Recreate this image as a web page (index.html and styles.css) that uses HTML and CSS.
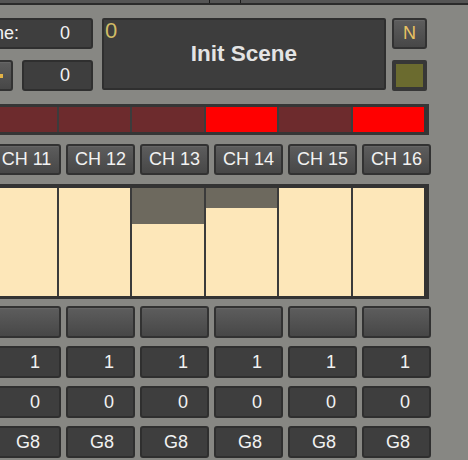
FILE: index.html
```html
<!DOCTYPE html>
<html>
<head>
<meta charset="utf-8">
<title>Scene Mixer</title>
<meta name="viewport" content="width=device-width, initial-scale=1">
<link rel="stylesheet" href="styles.css">
</head>
<body>
<div class="topbar"><span class="tick"></span><span class="tick tick2"></span></div>

<div class="head">
  <div class="lcol">
    <div class="vbox"><span class="label">Scene:</span><span>0</span></div>
    <div class="hrow">
      <div class="btn sbtn"><span class="mark"></span></div>
      <div class="vbox num">0</div>
    </div>
  </div>
  <div class="scene">
    <span class="sidx">0</span>
    <span class="sname">Init Scene</span>
  </div>
  <div class="rcol">
    <div class="btn nbtn">N</div>
    <div class="swatch"></div>
  </div>
</div>

<div class="strip">
  <div class="led"></div>
  <div class="led"></div>
  <div class="led"></div>
  <div class="led on"></div>
  <div class="led"></div>
  <div class="led on"></div>
</div>

<div class="row chs">
  <div class="btn">CH 11</div>
  <div class="btn">CH 12</div>
  <div class="btn">CH 13</div>
  <div class="btn">CH 14</div>
  <div class="btn">CH 15</div>
  <div class="btn">CH 16</div>
</div>

<div class="bars">
  <div class="bar"><div class="fill" style="height:100%"></div></div>
  <div class="bar"><div class="fill" style="height:100%"></div></div>
  <div class="bar"><div class="fill" style="height:66.7%"></div></div>
  <div class="bar"><div class="fill" style="height:81.5%"></div></div>
  <div class="bar"><div class="fill" style="height:100%"></div></div>
  <div class="bar"><div class="fill" style="height:100%"></div></div>
</div>

<div class="row first">
  <div class="btn"></div>
  <div class="btn"></div>
  <div class="btn"></div>
  <div class="btn"></div>
  <div class="btn"></div>
  <div class="btn"></div>
</div>

<div class="row">
  <div class="vbox num">1</div>
  <div class="vbox num">1</div>
  <div class="vbox num">1</div>
  <div class="vbox num">1</div>
  <div class="vbox num">1</div>
  <div class="vbox num">1</div>
</div>

<div class="row">
  <div class="vbox num">0</div>
  <div class="vbox num">0</div>
  <div class="vbox num">0</div>
  <div class="vbox num">0</div>
  <div class="vbox num">0</div>
  <div class="vbox num">0</div>
</div>

<div class="row">
  <div class="vbox num">G8</div>
  <div class="vbox num">G8</div>
  <div class="vbox num">G8</div>
  <div class="vbox num">G8</div>
  <div class="vbox num">G8</div>
  <div class="vbox num">G8</div>
</div>
</body>
</html>
```

FILE: styles.css
```css
html, body { margin: 0; }
body {
  background: #878783;
  font-family: "Liberation Sans", Arial, sans-serif;
  font-size: 18px;
  color: #f2f2f2;
  width: 468px;
  height: 460px;
  overflow: hidden;
}

/* strip at the very top */
.topbar { display: flex; height: 3px; background: #555555; border-bottom: 2px solid #2b2b2b; }
.tick { width: 1px; background: #1c1c1c; margin-left: 209px; }
.tick2 { margin-left: 30px; }

/* shared boxes */
.vbox {
  box-sizing: border-box;
  height: 31px;
  background: #3e3e3e;
  border: 2px solid #2f2f2f;
  border-radius: 3px;
  display: flex;
  align-items: center;
  justify-content: space-between;
  padding: 0 21px;
}
.vbox.num { justify-content: flex-end; padding: 0 19px 0 0; }

.btn {
  box-sizing: border-box;
  height: 31px;
  background: linear-gradient(#5d5d5d, #474747);
  border: 2px solid #323232;
  border-radius: 3px;
  box-shadow: inset 0 1px 0 #666666;
  display: flex;
  align-items: center;
  justify-content: center;
}

/* header */
.head { display: flex; margin-top: 13px; }
.lcol { display: flex; flex-direction: column; gap: 11px; width: 153px; margin-left: -60px; }
.lcol .vbox { padding-right: 21px; }
.hrow { display: flex; gap: 9px; }
.hrow .vbox { flex: 1; }
.sbtn { width: 73px; justify-content: flex-end; padding-right: 8px; }
.mark { width: 8px; height: 4px; background: #e2b246; }

.scene {
  position: relative;
  box-sizing: border-box;
  width: 284px;
  height: 72px;
  margin-left: 9px;
  background: #3d3d3d;
  border: 2px solid #2f2f2f;
  border-radius: 2px;
  display: flex;
  align-items: center;
  justify-content: center;
}
.sname { font-weight: bold; font-size: 22.5px; color: #e4e4e4; }
.sidx { position: absolute; left: 1px; top: 0; font-size: 22px; line-height: 1; color: #d0bc66; }

.rcol { display: flex; flex-direction: column; gap: 11px; width: 35px; margin-left: 6px; }
.nbtn { color: #e8c262; }
.swatch {
  box-sizing: border-box;
  height: 31px;
  background: #6b6b2f;
  border: 4px solid #373737;
  border-radius: 2px;
}

/* led strip */
.strip {
  display: flex;
  gap: 2px;
  box-sizing: border-box;
  width: 447px;
  height: 31px;
  margin: 13px 0 0 -18px;
  background: #3c3c3c;
  border: 3px solid #353535;
  border-right-width: 5px;
}
.led { flex: 1; background: #6d2b2d; }
.led.on { background: #ff0000; }

/* channel rows */
.row { display: flex; gap: 5px; margin: 8px 0 0 -8px; }
.row > div { width: 69px; flex: none; height: 32px; }
.row.chs { margin-top: 9px; }
.row.chs > div { height: 31px; }
.row.first { margin-top: 7px; }

/* level bars */
.bars {
  display: flex;
  gap: 2px;
  box-sizing: border-box;
  width: 447px;
  height: 115px;
  margin: 9px 0 0 -18px;
  background: #3b3b3b;
  border: 3px solid #333333;
  border-top-width: 4px;
  border-right-width: 5px;
}
.bar { flex: 1; background: #6d695e; display: flex; align-items: flex-end; }
.fill { width: 100%; background: #fde7b9; }
```
